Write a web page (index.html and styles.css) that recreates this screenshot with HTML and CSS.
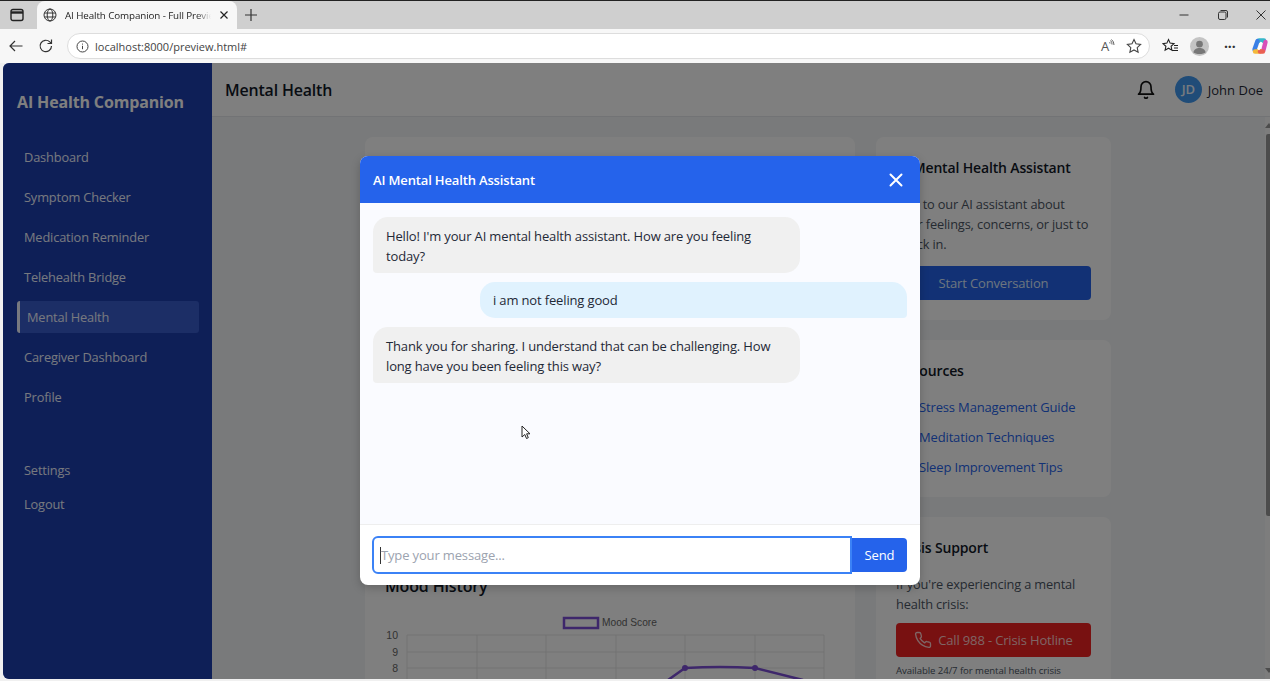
FILE: index.html
```html
<!DOCTYPE html>
<html>

<head>
    <meta name="viewport" content="width=device-width, initial-scale=1.0" />
    <title>AI Health Companion - Full Preview</title>
    <link rel="stylesheet" href="styles.css">
</head>

<body>
    <!-- Browser chrome -->
    <div class="tabbar">
        <svg class="tab-toggle" width="14" height="14" viewBox="0 0 14 14" fill="none" stroke="#222" stroke-width="1.4">
            <rect x="1" y="1.5" width="12" height="11" rx="2" />
            <path d="M1 4.5h12" stroke-width="2.4" />
        </svg>
        <div class="tab">
            <svg width="14" height="14" viewBox="0 0 14 14" fill="none" stroke="#333" stroke-width="1">
                <circle cx="7" cy="7" r="6" />
                <ellipse cx="7" cy="7" rx="2.8" ry="6" />
                <path d="M1.4 5h11.2M1.4 9h11.2" />
            </svg>
            <span class="tab-title">AI Health Companion - Full Previe</span>
            <svg width="10" height="10" viewBox="0 0 10 10" stroke="#222" stroke-width="1.2">
                <path d="M1.5 1.5l7 7M8.5 1.5l-7 7" />
            </svg>
        </div>
        <svg class="new-tab" width="14" height="14" viewBox="0 0 14 14" stroke="#333" stroke-width="1.2">
            <path d="M7 1v12M1 7h12" />
        </svg>
        <div class="window-btns">
            <svg width="12" height="12" viewBox="0 0 12 12" stroke="#333" stroke-width="1">
                <path d="M1.5 6h9" />
            </svg>
            <svg width="12" height="12" viewBox="0 0 12 12" fill="none" stroke="#333" stroke-width="1">
                <rect x="1.5" y="3" width="7.5" height="7.5" rx="1.5" />
                <path d="M3.5 1.5h5.5a1.5 1.5 0 0 1 1.5 1.5v5.5" />
            </svg>
            <svg width="12" height="12" viewBox="0 0 12 12" stroke="#333" stroke-width="1">
                <path d="M1.5 1.5l9 9M10.5 1.5l-9 9" />
            </svg>
        </div>
    </div>
    <div class="toolbar">
        <svg width="16" height="16" viewBox="0 0 16 16" fill="none" stroke="#333" stroke-width="1.2">
            <path d="M14.5 8H2M7 3L2 8l5 5" />
        </svg>
        <svg class="reload" width="16" height="16" viewBox="0 0 16 16" fill="none" stroke="#333" stroke-width="1.2">
            <path d="M13.5 8a5.7 5.7 0 1 1-1.7-4.1L13.5 5.5M13.5 1.5v4h-4" />
        </svg>
        <div class="address">
            <svg width="13" height="13" viewBox="0 0 13 13" fill="none" stroke="#444" stroke-width="1">
                <circle cx="6.5" cy="6.5" r="5.5" />
                <path d="M6.5 5.8v3.4M6.5 3.6v1" />
            </svg>
            <span class="url">localhost:8000/preview.html#</span>
            <span class="read-aloud">A</span>
            <svg class="waves" width="6" height="8" viewBox="0 0 6 8" fill="none" stroke="#555" stroke-width="0.9">
                <path d="M1 4.5a2 2 0 0 0-.5-1.5M3 5.5a5 5 0 0 0-1.5-4M5 6a7 7 0 0 0-2.500-5.500" />
            </svg>
            <svg width="16" height="16" viewBox="0 0 16 16" fill="none" stroke="#444" stroke-width="1.1">
                <path d="M8 1.5l2 4.3 4.6.6-3.4 3.2.9 4.600L8 11.900l-4.100 2.300.9-4.600L1.400 6.400l4.600-.6z" />
            </svg>
        </div>
        <svg class="fav" width="17" height="16" viewBox="0 0 17 16" fill="none" stroke="#222" stroke-width="1.1">
            <path d="M6.5 1.5l1.6 3.6 3.9.5-2.900 2.700.8 3.900-3.400-2-3.400 2 .8-3.900L1 5.600l3.900-.5zM12 7.500h4M12 10h4M9.500 12.500h6.500" />
        </svg>
        <svg class="avatar" width="19" height="19" viewBox="0 0 20 20">
            <circle cx="10" cy="10" r="10" fill="#c4c4c4" />
            <circle cx="10" cy="7.5" r="3.5" fill="#777" />
            <path d="M3.5 16c1-3.500 3.500-4.500 6.500-4.500s5.500 1 6.500 4.500c-2 2.500-11 2.500-13 0z" fill="#777" />
        </svg>
        <span class="more">&middot;&middot;&middot;</span>
        <svg class="copilot" width="18" height="18" viewBox="0 0 18 18" fill="none" stroke-width="4.4" stroke-linecap="round">
            <path d="M8 3.5h5" stroke="#35b8c9" />
            <path d="M6.5 4L3.5 12.500" stroke="#3a7fe6" />
            <path d="M14.5 5L12.500 13" stroke="#d84fb8" />
            <path d="M4 14.500h5" stroke="#f4b93a" />
            <path d="M9 14.500h3" stroke="#ea5f52" />
            <path d="M8 12L10 6" stroke="#fff" stroke-width="2.2" />
        </svg>
    </div>

    <!-- App -->
    <div class="app">
        <div class="sidebar">
            <div class="logo">AI Health Companion</div>
            <div class="nav">
                <a>Dashboard</a>
                <a>Symptom Checker</a>
                <a>Medication Reminder</a>
                <a>Telehealth Bridge</a>
                <a class="active">Mental Health</a>
                <a>Caregiver Dashboard</a>
                <a>Profile</a>
            </div>
            <div class="nav-bottom">
                <a>Settings</a>
                <a>Logout</a>
            </div>
        </div>

        <div class="main">
            <div class="header">
                <div class="page-title">Mental Health</div>
                <svg class="bell" width="20" height="20" viewBox="0 0 24 24" fill="none" stroke="#111" stroke-width="2" stroke-linecap="round" stroke-linejoin="round">
                    <path d="M18 8a6 6 0 0 0-12 0c0 7-3 9-3 9h18s-3-2-3-9" />
                    <path d="M13.7 21a2 2 0 0 1-3.400 0" />
                </svg>
                <div class="user-badge">JD</div>
                <div class="user-name">John Doe</div>
            </div>

            <div class="content">
                <div class="col-left">
                    <div class="card card-blank"></div>
                    <div class="card card-chart">
                        <h3>Mood History</h3>
                        <svg class="chart" width="460" height="70" viewBox="0 0 460 70">
                            <rect x="179" y="6" width="34" height="10" fill="none" stroke="#7c4fd6" stroke-width="2.5" />
                            <text x="217" y="14" class="legend">Mood Score</text>
                            <text x="13" y="27" text-anchor="end" class="tick">10</text>
                            <text x="13" y="44" text-anchor="end" class="tick">9</text>
                            <text x="13" y="60" text-anchor="end" class="tick">8</text>
                            <path class="grid" d="M22 23h417M22 40h417M22 56h417M22 23v47M92 23v47M161 23v47M231 23v47M300 23v47M370 23v47M439 23v47" />
                            <path d="M283 68L300 56Q335 54 370 56L418 68" fill="none" stroke="#7c4fd6" stroke-width="2.5" />
                            <circle cx="300" cy="56" r="3" fill="#7c4fd6" />
                            <circle cx="370" cy="56" r="3" fill="#7c4fd6" />
                        </svg>
                    </div>
                </div>
                <div class="col-right">
                    <div class="card">
                        <h3>AI Mental Health Assistant</h3>
                        <p>Talk to our AI assistant about your feelings, concerns, or just to check in.</p>
                        <div class="btn btn-blue">Start Conversation</div>
                    </div>
                    <div class="card">
                        <h3>Resources</h3>
                        <div class="links">
                            <a>Stress Management Guide</a>
                            <a>Meditation Techniques</a>
                            <a>Sleep Improvement Tips</a>
                        </div>
                    </div>
                    <div class="card">
                        <h3>Crisis Support</h3>
                        <p>If you're experiencing a mental health crisis:</p>
                        <div class="btn btn-red">
                            <svg width="18" height="18" viewBox="0 0 24 24" fill="none" stroke="currentColor" stroke-width="1.8" stroke-linecap="round" stroke-linejoin="round">
                                <path d="M22 16.900v3a2 2 0 0 1-2.200 2 19.800 19.800 0 0 1-8.600-3.100 19.500 19.500 0 0 1-6-6 19.800 19.800 0 0 1-3.100-8.700A2 2 0 0 1 4.100 2h3a2 2 0 0 1 2 1.700c.1 1 .4 1.900.7 2.800a2 2 0 0 1-.5 2.100L8.100 9.900a16 16 0 0 0 6 6l1.300-1.300a2 2 0 0 1 2.100-.4c.9.3 1.800.6 2.800.7a2 2 0 0 1 1.700 2z" />
                            </svg>
                            Call 988 - Crisis Hotline
                        </div>
                        <div class="small">Available 24/7 for mental health crisis</div>
                    </div>
                </div>
            </div>
        </div>
        <div class="scrollbar">
            <span class="arrow-up"></span>
            <span class="thumb"></span>
            <span class="arrow-down"></span>
        </div>

        <!-- Chat modal -->
        <div class="overlay">
            <div class="modal">
                <div class="modal-head">
                    <span>AI Mental Health Assistant</span>
                    <svg width="18" height="18" viewBox="0 0 18 18" stroke="#fff" stroke-width="2" stroke-linecap="round">
                        <path d="M3.5 3.5l11 11M14.500 3.500l-11 11" />
                    </svg>
                </div>
                <div class="messages">
                    <div class="msg bot">Hello! I'm your AI mental health assistant. How are you feeling today?</div>
                    <div class="msg me">i am not feeling good</div>
                    <div class="msg bot">Thank you for sharing. I understand that can be challenging. How long have you been feeling this way?</div>
                    <svg class="cursor" width="10" height="15" viewBox="0 0 10 15" fill="#fff" stroke="#222" stroke-width="1">
                        <path d="M1 1v11l2.800-2.500 1.700 4 1.800-.8-1.700-3.900H9z" />
                    </svg>
                </div>
                <div class="input-row">
                    <div class="input"><i></i>Type your message...</div>
                    <div class="send">Send</div>
                </div>
            </div>
        </div>
    </div>
</body>

</html>
```

FILE: styles.css
```css
* {
    box-sizing: border-box;
}

html,
body {
    margin: 0;
    height: 681px;
    overflow: hidden;
}

body {
    font-family: "Open Sans", "Noto Sans", sans-serif;
    font-size: 13px;
    letter-spacing: -0.15px;
    background: #f0f0f0;
    display: flex;
    flex-direction: column;
}

svg {
    flex: none;
}

/* browser chrome */
.tabbar {
    height: 29px;
    flex: none;
    background: #cfcfcf;
    border-top: 1px solid #222;
    display: flex;
    align-items: center;
    padding-left: 10px;
}

.tab {
    width: 200px;
    height: 28px;
    margin-left: 13px;
    background: #f7f7f7;
    border-radius: 8px 8px 0 0;
    display: flex;
    align-items: center;
    gap: 8px;
    padding: 0 8px 0 6px;
    align-self: flex-end;
}

.tab-title {
    flex: 1;
    min-width: 0;
    font-size: 9.8px;
    letter-spacing: -0.1px;
    color: #222;
    white-space: nowrap;
    -webkit-mask-image: linear-gradient(to right, #000 90%, transparent);
    mask-image: linear-gradient(to right, #000 90%, transparent);
}

.new-tab {
    margin-left: 7px;
}

.window-btns {
    margin-left: auto;
    width: 92px;
    display: flex;
    justify-content: space-between;
    padding-right: 3px;
}

.toolbar {
    height: 34px;
    flex: none;
    background: #f7f7f7;
    display: flex;
    align-items: center;
    padding-left: 8px;
}

.reload {
    margin-left: 14px;
}

.address {
    width: 1083px;
    flex: none;
    height: 26px;
    margin-left: 13px;
    background: #fff;
    border: 1px solid #ddd;
    border-radius: 13px;
    display: flex;
    align-items: center;
    padding: 0 7px 0 8px;
}

.url {
    flex: 1;
    margin-left: 6px;
    font-size: 11px;
    letter-spacing: 0;
    color: #444;
}

.read-aloud {
    font-size: 13px;
    color: #555;
}

.waves {
    margin: 0 11px 7px 0;
}

.fav {
    margin-left: 12px;
}

.avatar {
    margin-left: 11px;
}

.more {
    margin-left: 15px;
    font-size: 14px;
    font-weight: 700;
    color: #333;
}

.copilot {
    margin-left: 15px;
}

/* app */
.app {
    flex: 1;
    min-height: 0;
    margin: 0 0 2px 3px;
    position: relative;
    display: flex;
    background: #f3f4f6;
    overflow: hidden;
    border-radius: 6px 0 0 6px;
}

.sidebar {
    width: 209px;
    flex: none;
    background: #1c3eae;
    padding: 27px 13px 0 14px;
}

.logo {
    font-size: 16px;
    font-weight: 700;
    line-height: 24px;
    white-space: nowrap;
    color: #fff;
}

.nav {
    margin-top: 27px;
    display: flex;
    flex-direction: column;
    gap: 8px;
}

.nav a,
.nav-bottom a {
    display: block;
    height: 32px;
    line-height: 32px;
    font-size: 12.8px;
    padding-left: 7px;
    color: #eef2ff;
    white-space: nowrap;
}

.nav a.active {
    background: #385ccc;
    border-left: 3px solid #eef2ff;
    border-radius: 3px;
}

.nav-bottom {
    margin-top: 41px;
    display: flex;
    flex-direction: column;
    gap: 2px;
}

.main {
    flex: 1;
    min-width: 0;
}

.header {
    height: 54px;
    background: #fff;
    border-bottom: 1px solid #e5e7eb;
    display: flex;
    align-items: center;
    padding: 0 7px 0 13px;
}

.page-title {
    font-size: 15.9px;
    font-weight: 600;
    padding-top: 1px;
    color: #111827;
    flex: 1;
}

.bell {
    margin-right: 19px;
}

.user-badge {
    width: 27px;
    height: 27px;
    border-radius: 50%;
    background: #4099f0;
    color: #eff6ff;
    font-size: 13px;
    font-weight: 600;
    text-align: center;
    line-height: 27px;
}

.user-name {
    margin-left: 6px;
    letter-spacing: 0;
    color: #1f2937;
}

.content {
    display: flex;
    gap: 21px;
    align-items: flex-start;
    padding: 20px 0 0 153px;
}

.col-left {
    width: 490px;
    display: flex;
    flex-direction: column;
    gap: 20px;
}

.col-right {
    width: 235px;
    display: flex;
    flex-direction: column;
    gap: 20px;
}

.card {
    background: #fff;
    border-radius: 8px;
    padding: 20px;
}

.card-blank {
    height: 398px;
}

.card h3 {
    margin: 0;
    font-size: 14px;
    line-height: 22px;
    font-weight: 600;
    color: #111827;
    white-space: nowrap;
}

.card-chart h3 {
    font-size: 16px;
}

.chart {
    display: block;
    margin-top: 15px;
}

.legend {
    font: 10.2px "Liberation Sans", sans-serif;
    letter-spacing: 0;
    fill: #666;
}

.tick {
    font: 10.5px "Liberation Sans", sans-serif;
    letter-spacing: 0;
    fill: #666;
}

.grid {
    fill: none;
    stroke: #e5e5e5;
    stroke-width: 1;
}

.card p {
    margin: 15px 0 0;
    font-size: 12.8px;
    line-height: 20px;
    color: #4b5563;
}

.btn {
    height: 34px;
    margin-top: 12px;
    border-radius: 4px;
    display: flex;
    align-items: center;
    justify-content: center;
    gap: 6px;
}

.btn-blue {
    background: #2563eb;
    color: #dbeafe;
}

.btn-red {
    margin-top: 9px;
    background: #f02222;
    color: #fecaca;
}

.links {
    margin-top: 15px;
    display: flex;
    flex-direction: column;
    gap: 10px;
}

.links a {
    line-height: 20px;
    color: #2563eb;
    padding-left: 23px;
    white-space: nowrap;
}

.small {
    margin-top: 7px;
    font-size: 9.6px;
    letter-spacing: -0.07px;
    color: #4b5563;
    white-space: nowrap;
}

/* scrollbar sits on top of the page edge */
.scrollbar {
    position: absolute;
    right: 0;
    top: 54px;
    bottom: 0;
    width: 5px;
    background: #fafafa;
}

.thumb {
    position: absolute;
    left: 1px;
    right: 0;
    top: 17px;
    height: 382px;
    background: #999;
    border-radius: 2px 0 0 2px;
}

.arrow-up,
.arrow-down {
    position: absolute;
    left: 0;
    border-left: 4px solid transparent;
    border-right: 4px solid transparent;
}

.arrow-up {
    top: 6px;
    border-bottom: 5px solid #999;
}

.arrow-down {
    bottom: 6px;
    border-top: 5px solid #999;
}

/* modal */
.overlay {
    position: absolute;
    inset: 0;
    background: rgba(0, 0, 0, 0.5);
}

.modal {
    position: absolute;
    left: 357px;
    top: 93px;
    width: 560px;
    height: 429px;
    background: #fff;
    border-radius: 8px;
    box-shadow: 0 3px 10px rgba(0, 0, 0, 0.2);
    display: flex;
    flex-direction: column;
    overflow: hidden;
}

.modal-head {
    height: 47px;
    flex: none;
    background: #2563eb;
    color: #fff;
    display: flex;
    align-items: center;
    justify-content: space-between;
    padding: 0 15px 0 13px;
    font-weight: 600;
}

.messages {
    flex: 1;
    position: relative;
    background: #fafbff;
    padding: 14px 13px;
    display: flex;
    flex-direction: column;
    gap: 9px;
}

.msg {
    width: 427px;
    padding: 8px 13px;
    line-height: 20px;
    color: #1f2937;
    border-radius: 15px 15px 15px 4px;
}

.bot {
    padding: 9px 13px 7px;
    background: #f0f0f0;
}

.me {
    align-self: flex-end;
    background: #e0f2fe;
    border-radius: 15px 15px 4px 15px;
}

.cursor {
    position: absolute;
    left: 161px;
    top: 222px;
}

.input-row {
    height: 61px;
    flex: none;
    border-top: 1px solid #eee;
    display: flex;
    align-items: center;
    padding: 0 13px 0 12px;
}

.input {
    flex: 1;
    height: 38px;
    border: 2px solid #3b82f6;
    border-radius: 6px 0 0 6px;
    color: #9ca3af;
    display: flex;
    align-items: center;
    padding-left: 6px;
}

.input i {
    width: 1px;
    height: 17px;
    background: #333;
}

.send {
    width: 55px;
    height: 34px;
    background: #2563eb;
    color: #fff;
    border-radius: 0 4px 4px 0;
    display: flex;
    align-items: center;
    justify-content: center;
}
```
